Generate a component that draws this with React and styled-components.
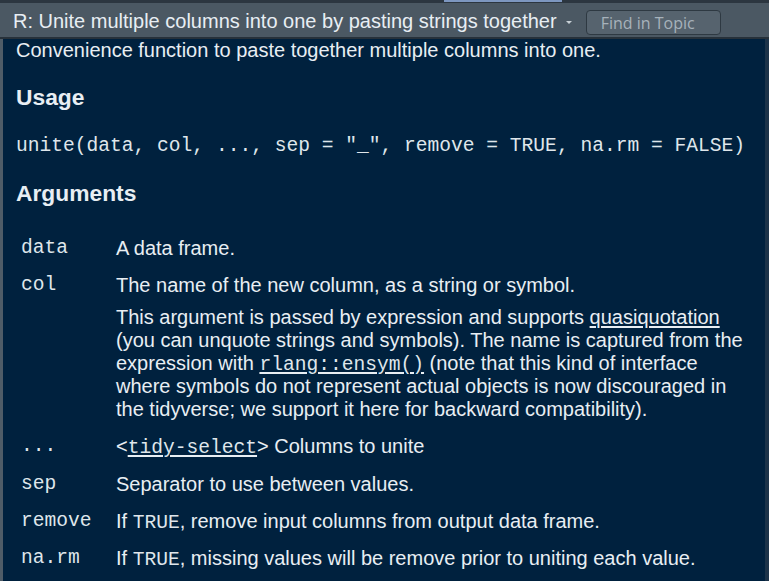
import React from "react"
import styled, { createGlobalStyle } from "styled-components"

const GlobalStyle = createGlobalStyle`
  html, body {
    margin: 0;
    padding: 0;
    background: #00213e;
    overflow: hidden;
  }
  #root {
    width: 769px;
    height: 581px;
  }
`

const COLORS = {
  navy: "#00213e",
  bar: "#4b5863",
  text: "#e8eef3",
  mono: "#dfe6eb",
  dim: "#a7b2bb",
}

const Frame = styled.div`
  width: 769px;
  height: 581px;
  display: flex;
  flex-direction: column;
  overflow: hidden;
  background: ${COLORS.navy};
`

const TabStrip = styled.div`
  height: 3px;
  background: #2c3640;
  display: flex;
  padding-left: 444px;
`

const TabHighlight = styled.div`
  width: 118px;
  height: 2px;
  background: #7d97c0;
`

const TopBar = styled.div`
  height: 34px;
  background: ${COLORS.bar};
  border-bottom: 2px solid #27313a;
  display: flex;
  align-items: center;
  padding-left: 13px;
`

const Title = styled.div`
  font-family: "Liberation Sans", Arial, sans-serif;
  font-size: 20px;
  color: ${COLORS.text};
  white-space: nowrap;
  margin-top: 3px;
`

const Caret = styled.span`
  width: 0;
  height: 0;
  border-left: 3.5px solid transparent;
  border-right: 3.5px solid transparent;
  border-top: 3.5px solid #c8d0d6;
  margin: 4px 14px 0 9px;
`

const FindBox = styled.div`
  width: 135px;
  height: 25px;
  box-sizing: border-box;
  border: 1px solid #2e3942;
  border-radius: 4px;
  background: #56636e;
  display: flex;
  align-items: center;
  padding-left: 14px;
  font-family: "Open Sans", "Noto Sans", sans-serif;
  font-size: 16px;
  color: ${COLORS.dim};
  margin-top: 5px;
`

const Body = styled.div`
  flex: 1;
  display: flex;
  min-height: 0;
`

const Content = styled.div`
  flex: 1;
  border-left: 3px solid #4f5c67;
  padding-left: 13px;
  overflow: hidden;
  color: ${COLORS.text};
  font-family: "Liberation Sans", Arial, sans-serif;
  font-size: 20px;
  line-height: 23px;
`

const ScrollEdge = styled.div`
  width: 4px;
  background: #1c3349;
`

const Lead = styled.p`
  margin: 0;
  line-height: 22.5px;
`

const Heading = styled.h3`
  font-size: 22.8px;
  font-weight: bold;
  line-height: 27px;
  margin: ${(p) => p.$top}px 0 0;
`

const Code = styled.pre`
  font-family: "Liberation Mono", "Courier New", monospace;
  font-size: 19.6px;
  line-height: 23px;
  margin: 24px 0 0;
  white-space: pre;
  color: ${COLORS.mono};
`

const ArgTable = styled.div`
  display: grid;
  grid-template-columns: 95px 1fr;
  margin-top: 23px;
`

const ArgName = styled.div`
  font-family: "Liberation Mono", "Courier New", monospace;
  font-size: 19.6px;
  line-height: 23px;
  padding: 7px 5px;
  color: ${COLORS.mono};
`

const ArgDesc = styled.div`
  padding: 7px 10px 7px 5px;
`

const Para = styled.p`
  margin: 0;
  & + & {
    margin-top: 9px;
  }
`

const Link = styled.span`
  text-decoration: underline;
  text-underline-offset: 2px;
`

const Mono = styled.code`
  font-family: "Liberation Mono", "Courier New", monospace;
  font-size: 19.6px;
  line-height: 1;
  color: ${COLORS.mono};
`

const args = [
  { name: "data", desc: [<>A data frame.</>] },
  {
    name: "col",
    desc: [
      <>The name of the new column, as a string or symbol.</>,
      <>
        This argument is passed by expression and supports <Link>quasiquotation</Link>
        <br />
        (you can unquote strings and symbols). The name is captured from the
        <br />
        expression with <Link><Mono>rlang::ensym()</Mono></Link> (note that this kind of interface
        <br />
        where symbols do not represent actual objects is now discouraged in
        <br />
        the tidyverse; we support it here for backward compatibility).
      </>,
    ],
  },
  {
    name: "...",
    desc: [
      <>
        &lt;<Link><Mono>tidy-select</Mono></Link>&gt; Columns to unite
      </>,
    ],
  },
  { name: "sep", desc: [<>Separator to use between values.</>] },
  {
    name: "remove",
    desc: [
      <>
        If <Mono>TRUE</Mono>, remove input columns from output data frame.
      </>,
    ],
  },
  {
    name: "na.rm",
    desc: [
      <>
        If <Mono>TRUE</Mono>, missing values will be remove prior to uniting each value.
      </>,
    ],
  },
]

export default function App() {
  return (
    <Frame>
      <GlobalStyle />
      <TabStrip>
        <TabHighlight />
      </TabStrip>
      <TopBar>
        <Title>R: Unite multiple columns into one by pasting strings together</Title>
        <Caret />
        <FindBox>Find in Topic</FindBox>
      </TopBar>
      <Body>
        <Content>
          <Lead>Convenience function to paste together multiple columns into one.</Lead>
          <Heading $top={22}>Usage</Heading>
          <Code>unite(data, col, ..., sep = "_", remove = TRUE, na.rm = FALSE)</Code>
          <Heading $top={22}>Arguments</Heading>
          <ArgTable>
            {args.map((a) => (
              <React.Fragment key={a.name}>
                <ArgName>{a.name}</ArgName>
                <ArgDesc>
                  {a.desc.map((d, j) => (
                    <Para key={j}>{d}</Para>
                  ))}
                </ArgDesc>
              </React.Fragment>
            ))}
          </ArgTable>
        </Content>
        <ScrollEdge />
      </Body>
    </Frame>
  )
}
